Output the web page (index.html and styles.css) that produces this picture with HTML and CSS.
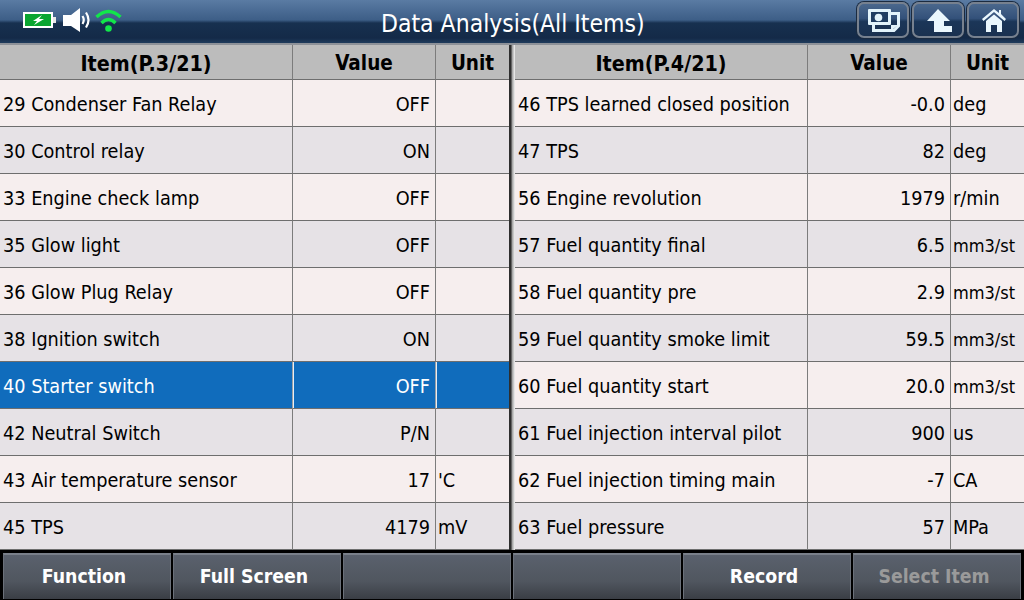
FILE: index.html
```html
<!DOCTYPE html>
<html lang="en">
<head>
    <meta charset="UTF-8">
    <title>Data Analysis</title>
    <link rel="stylesheet" href="styles.css">
</head>
<body>
    <div class="screen">
        <div class="topbar">
            <div class="status">
                <svg class="battery" width="33" height="16" viewBox="0 0 33 16">
                    <rect x="1" y="1" width="28" height="14" fill="#0aa531" stroke="#fff" stroke-width="2"/>
                    <rect x="30" y="5" width="3" height="6" fill="#e8e8e8"/>
                    <path d="M19 3 L10 9 L14 9 L11 13 L21 7 L16 7 Z" fill="#fff"/>
                </svg>
                <svg class="speaker" width="28" height="24" viewBox="0 0 28 24">
                    <path d="M0 7 H8 L17 0 V24 L8 18 H0 Z" fill="#fff"/>
                    <path d="M19.5 8 Q22 12 19.5 16" fill="none" stroke="#fff" stroke-width="2.2"/>
                    <path d="M23 4.5 Q28 12 23 19.5" fill="none" stroke="#fff" stroke-width="2.2"/>
                </svg>
                <svg class="wifi" width="27" height="23" viewBox="0 0 27 23">
                    <path d="M1.5 8 Q13.5 -3 25.5 8" fill="none" stroke="#12e64a" stroke-width="3.4"/>
                    <path d="M6.5 14 Q13.5 7 20.5 14" fill="none" stroke="#12e64a" stroke-width="3.4"/>
                    <circle cx="13.5" cy="19.5" r="3.3" fill="#12e64a"/>
                </svg>
            </div>
            <div class="title">Data Analysis(All Items)</div>
            <div class="topbtns">
                <div class="topbtn">
                    <svg class="ic-card" width="32" height="23" viewBox="0 0 32 23">
                        <path d="M22 4.5 H30.5 V17 L26 21.5 H5.5 V15" fill="none" stroke="#e2f3fb" stroke-width="3"/>
                        <path d="M23 16 H30 L23 22 Z" fill="#e2f3fb"/>
                        <rect x="0" y="0" width="23" height="16" rx="1" fill="#e2f3fb"/>
                        <rect x="3" y="3" width="17" height="10" fill="#1f3d62"/>
                        <circle cx="10.5" cy="8.5" r="3.8" fill="#e2f3fb"/>
                    </svg>
                </div>
                <div class="topbtn">
                    <svg class="ic-up" width="25" height="23" viewBox="0 0 25 23">
                        <path d="M11 0 L23 12 H17 V17 H25 V23 H7 V12 H0 Z" fill="#eaf7fd"/>
                    </svg>
                </div>
                <div class="topbtn">
                    <svg class="ic-home" width="24" height="23" viewBox="0 0 24 23">
                        <path d="M17 1 H19 V5 L24 10 L22.5 12 L12 3 L1.5 12 L0 10 L12 0 L17 4 Z" fill="#eaf7fd"/>
                        <path d="M4 12 L12 5.5 L20 12 V23 H15 V16 H9 V23 H4 Z" fill="#eaf7fd"/>
                    </svg>
                </div>
            </div>
        </div>

        <div class="tables">
            <div class="grid">
                <div class="head item">Item(P.3/21)</div><div class="head">Value</div><div class="head">Unit</div>

                <div class="cell a">29 Condenser Fan Relay</div><div class="cell a val">OFF</div><div class="cell a unit"></div>
                <div class="cell b">30 Control relay</div><div class="cell b val">ON</div><div class="cell b unit"></div>
                <div class="cell a">33 Engine check lamp</div><div class="cell a val">OFF</div><div class="cell a unit"></div>
                <div class="cell b">35 Glow light</div><div class="cell b val">OFF</div><div class="cell b unit"></div>
                <div class="cell a">36 Glow Plug Relay</div><div class="cell a val">OFF</div><div class="cell a unit"></div>
                <div class="cell b">38 Ignition switch</div><div class="cell b val">ON</div><div class="cell b unit"></div>
                <div class="cell sel">40 Starter switch</div><div class="cell sel val">OFF</div><div class="cell sel unit"></div>
                <div class="cell b">42 Neutral Switch</div><div class="cell b val">P/N</div><div class="cell b unit"></div>
                <div class="cell a">43 Air temperature sensor</div><div class="cell a val">17</div><div class="cell a unit">'C</div>
                <div class="cell b">45 TPS</div><div class="cell b val">4179</div><div class="cell b unit">mV</div>
            </div>
            <div class="divider"></div>
            <div class="grid right">
                <div class="head item">Item(P.4/21)</div><div class="head">Value</div><div class="head">Unit</div>

                <div class="cell a">46 TPS learned closed position</div><div class="cell a val">-0.0</div><div class="cell a unit">deg</div>
                <div class="cell b">47 TPS</div><div class="cell b val">82</div><div class="cell b unit">deg</div>
                <div class="cell a">56 Engine revolution</div><div class="cell a val">1979</div><div class="cell a unit">r/min</div>
                <div class="cell b">57 Fuel quantity final</div><div class="cell b val">6.5</div><div class="cell b unit small">mm3/st</div>
                <div class="cell a">58 Fuel quantity pre</div><div class="cell a val">2.9</div><div class="cell a unit small">mm3/st</div>
                <div class="cell b">59 Fuel quantity smoke limit</div><div class="cell b val">59.5</div><div class="cell b unit small">mm3/st</div>
                <div class="cell a">60 Fuel quantity start</div><div class="cell a val">20.0</div><div class="cell a unit small">mm3/st</div>
                <div class="cell b">61 Fuel injection interval pilot</div><div class="cell b val">900</div><div class="cell b unit">us</div>
                <div class="cell a">62 Fuel injection timing main</div><div class="cell a val">-7</div><div class="cell a unit">CA</div>
                <div class="cell b">63 Fuel pressure</div><div class="cell b val">57</div><div class="cell b unit">MPa</div>
            </div>
        </div>

        <div class="footer">
            <div class="fbtn">Function</div>
            <div class="fbtn">Full Screen</div>
            <div class="fbtn"></div>
            <div class="fbtn"></div>
            <div class="fbtn">Record</div>
            <div class="fbtn off">Select Item</div>
        </div>
    </div>
</body>
</html>
```

FILE: styles.css
```css
* { box-sizing: border-box; }
html, body { margin: 0; padding: 0; }
body { width: 1024px; height: 600px; overflow: hidden; background: #000; font-family: "DejaVu Sans Condensed", "DejaVu Sans", sans-serif; }
.screen { width: 1024px; height: 600px; display: flex; flex-direction: column; }

.topbar { height: 45px; display: flex; align-items: center; justify-content: space-between; position: relative; border-bottom: 2px solid #8d9198; background: linear-gradient(#5a7ba3 0, #3d5e87 20px, #17304f 23px, #142a48 38px, #1f3b5c 43px); }
.status { display: flex; align-items: center; padding: 0 0 3px 23px; }
.speaker { margin: 0 4px 0 7px; }
.title { position: absolute; left: 381px; top: 9px; color: #fff; font-size: 24.5px; white-space: nowrap; }
.topbtns { display: flex; gap: 3px; padding: 0 5px 3px 0; }
.topbtn { width: 52px; height: 36px; display: flex; align-items: center; justify-content: center; border: 2px solid #77818f; border-radius: 7px; box-shadow: 0 0 0 1px #1b2b40; background: linear-gradient(#4a678c, #33517a 45%, #1b3658 55%, #1a3150); }
.ic-card { margin-left: 2px; margin-top: 1px; }
.ic-up { margin-left: 3px; margin-top: 1px; }
.ic-home { margin-left: 2px; }

.tables { height: 505px; display: flex; background: #2a2a2a; }
.grid { width: 509px; display: grid; grid-template-columns: 293px 143px 73px; grid-template-rows: 35px repeat(10, 47px); }
.divider { width: 6px; background: linear-gradient(90deg, #2e2e2e 0, #2e2e2e 2px, #9a9a9a 3px, #f4f4f4 6px); }

.head { background: #bcbcbc; color: #000; font-weight: bold; font-size: 20.5px; text-align: center; line-height: 37px; border-right: 1px solid #7c7c7c; border-bottom: 1px solid #6e6e6e; }
.head.item { font-size: 21.3px; }
.cell { display: flex; align-items: center; padding: 2px 0 0 3px; font-size: 19.7px; color: #000; border-right: 1px solid #7c7c7c; border-bottom: 1px solid #6e6e6e; white-space: nowrap; }
.head:nth-child(3n), .cell:nth-child(3n) { border-right: none; }
.cell.a { background: #f6eeee; }
.cell.b { background: #e6e2e6; }
.cell.sel { background: #106cbc; color: #fff; border-right-color: #9aa0a6; }
.cell.sel.val, .cell.sel.unit { box-shadow: inset 1px 0 0 #e8eef4; }
.cell.val { justify-content: flex-end; padding-right: 5px; padding-left: 0; }
.cell.unit { padding-left: 2px; }
.cell.small { font-size: 18px; }

.footer { height: 50px; display: flex; background: #000; padding: 3px 3px 1px 3px; gap: 2px; }
.fbtn { width: 168px; display: flex; align-items: center; justify-content: center; padding: 0 6px 2px 0; color: #fff; font-weight: bold; font-size: 19.3px; border-top: 2px solid #7a808a; border-left: 1px solid #6b717a; border-right: 1px solid #6b717a; background: linear-gradient(#5a616d, #50565f 60%, #3a3e45); }
.fbtn.off { color: #9a9a9a; }
```
